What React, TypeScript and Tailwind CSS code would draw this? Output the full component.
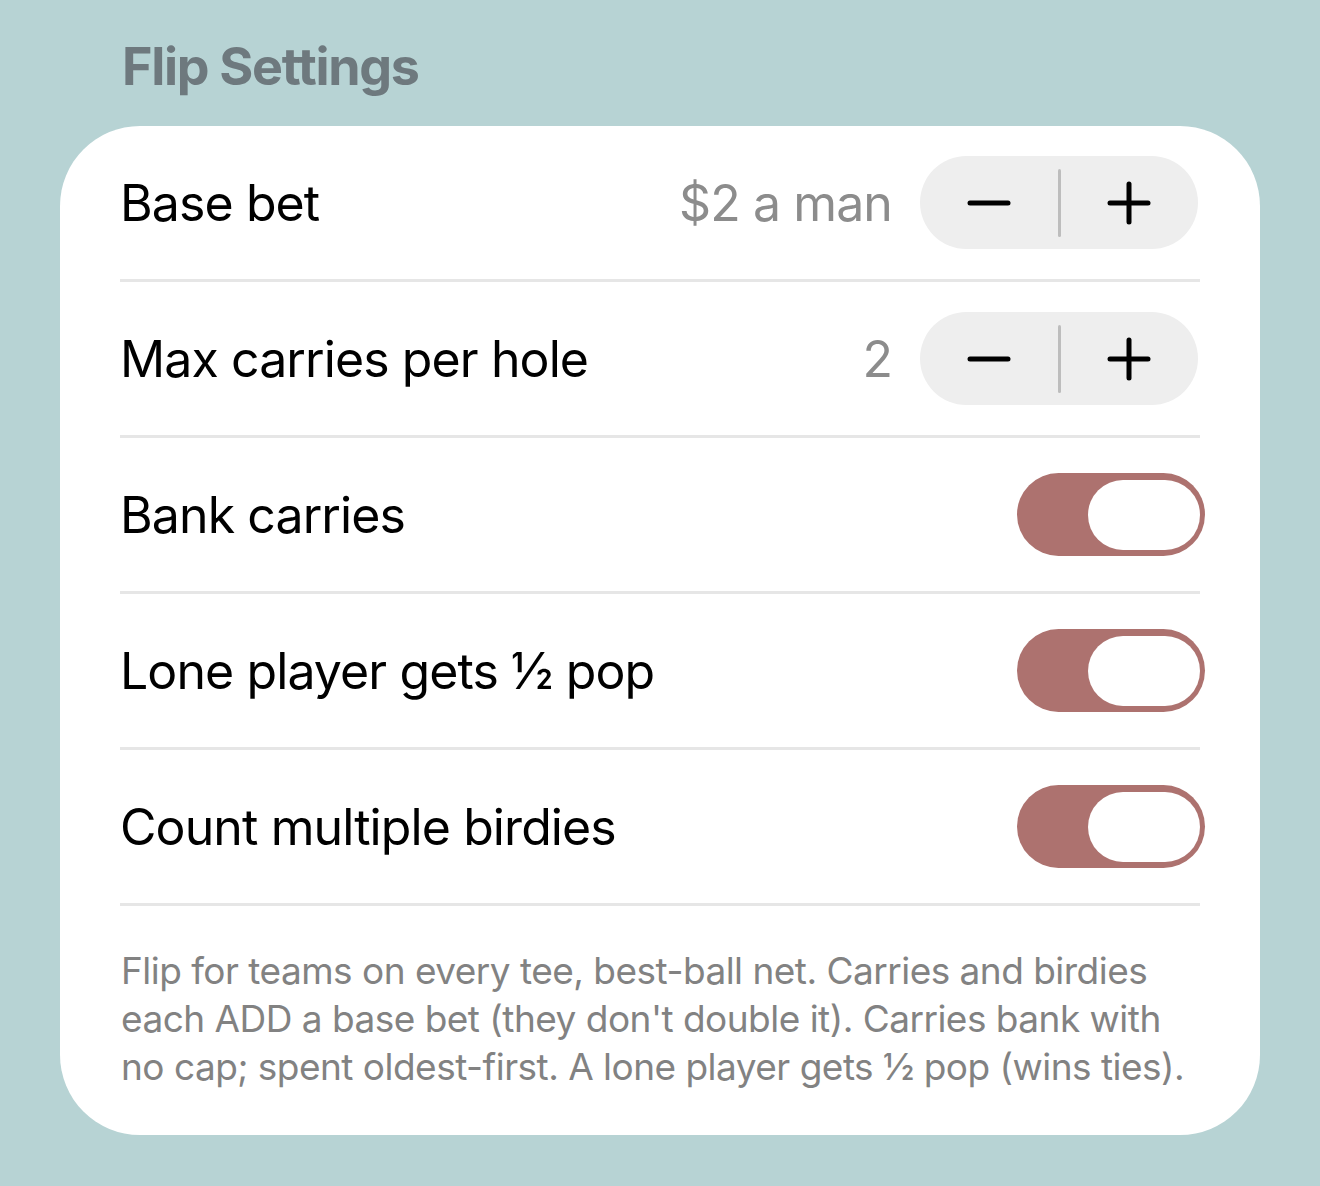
import React from "react";

const font = { fontFamily: 'Inter, "Noto Sans", "Liberation Sans", sans-serif' };

function Stepper() {
  return (
    <div className="mr-[2px] flex h-[93px] w-[278px] items-center rounded-full bg-[#eeeeee]">
      <button className="flex h-full flex-1 items-center justify-center" aria-label="Decrease">
        <svg width="44" height="44" viewBox="0 0 44 44">
          <line x1="3" y1="22" x2="41" y2="22" stroke="#000" strokeWidth="5" strokeLinecap="round" />
        </svg>
      </button>
      <div className="h-[68px] w-[3px] rounded-full bg-[#bdbdbd]" />
      <button className="flex h-full flex-1 items-center justify-center" aria-label="Increase">
        <svg width="44" height="44" viewBox="0 0 44 44">
          <line x1="3" y1="22" x2="41" y2="22" stroke="#000" strokeWidth="5" strokeLinecap="round" />
          <line x1="22" y1="3" x2="22" y2="41" stroke="#000" strokeWidth="5" strokeLinecap="round" />
        </svg>
      </button>
    </div>
  );
}

function Toggle() {
  return (
    <div className="-mr-[5px] flex h-[83px] w-[188px] items-center justify-end rounded-full bg-[#ad726f] pr-[5px]">
      <div className="h-[70px] w-[112px] rounded-full bg-white" />
    </div>
  );
}

function Row({ label, children }: { label: string; children: React.ReactNode }) {
  return (
    <div className="flex h-[156px] items-center justify-between border-b-[3px] border-[#e6e6e6]">
      <span className="text-[50px] leading-none tracking-[-0.018em] text-black">{label}</span>
      <div className="flex items-center gap-[28px]">{children}</div>
    </div>
  );
}

export default function App() {
  return (
    <div className="min-h-[1186px] w-full bg-[#b7d3d4] px-[60px] pt-[41px]" style={font}>
      <h2 className="pl-[62px] text-[52px] font-bold leading-none tracking-[-0.025em] text-[#6e797e]">
        Flip Settings
      </h2>
      <div className="mt-[33px] w-[1200px] rounded-[80px] bg-white px-[60px]">
        <Row label="Base bet">
          <span className="text-[50px] leading-none tracking-[-0.018em] text-[#8c8c8c]">$2 a man</span>
          <Stepper />
        </Row>
        <Row label="Max carries per hole">
          <span className="text-[50px] leading-none tracking-[-0.018em] text-[#8c8c8c]">2</span>
          <Stepper />
        </Row>
        <Row label="Bank carries">
          <Toggle />
        </Row>
        <Row label="Lone player gets ½ pop">
          <Toggle />
        </Row>
        <Row label="Count multiple birdies">
          <Toggle />
        </Row>
        <p className="whitespace-nowrap pb-[44px] pl-[1px] pt-[41px] text-[37px] leading-[48px] tracking-[-0.014em] text-[#828282]">
          <span className="block">Flip for teams on every tee, best-ball net. Carries and birdies</span>
          <span className="block">each ADD a base bet (they don't double it). Carries bank with</span>
          <span className="block">no cap; spent oldest-first. A lone player gets ½ pop (wins ties).</span>
        </p>
      </div>
    </div>
  );
}
